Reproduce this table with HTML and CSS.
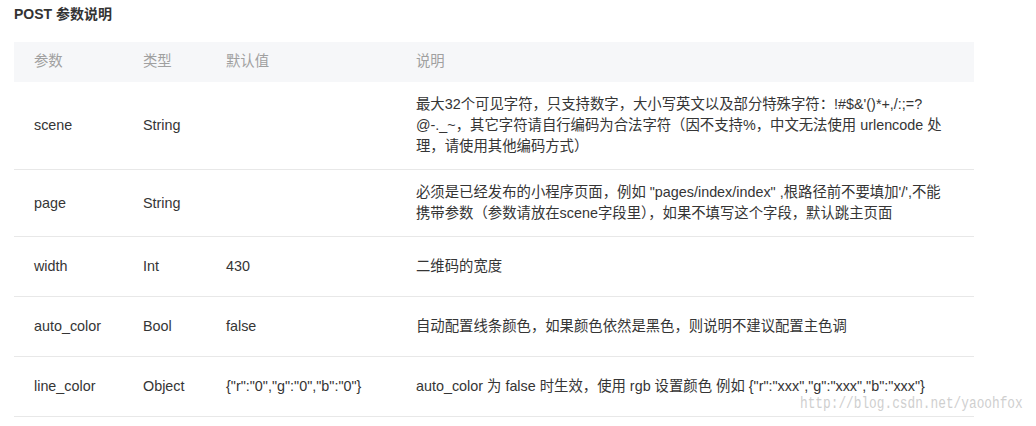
FILE: index.html
```html
<!DOCTYPE html>
<html lang="zh-CN">
<head>
<meta charset="utf-8">
<title>POST 参数说明</title>
<link rel="stylesheet" href="styles.css">
</head>
<body>
<div class="page">
  <h3 class="title">POST 参数说明</h3>
  <div class="table">
    <div class="row head">
      <div class="cell">参数</div>
      <div class="cell">类型</div>
      <div class="cell">默认值</div>
      <div class="cell">说明</div>
    </div>
    <div class="row">
      <div class="cell">scene</div>
      <div class="cell">String</div>
      <div class="cell"></div>
      <div class="cell">最大32个可见字符，只支持数字，大小写英文以及部分特殊字符：!#$&amp;'()*+,/:;=?<br>@-._~，其它字符请自行编码为合法字符（因不支持%，中文无法使用 urlencode 处<br>理，请使用其他编码方式）</div>
    </div>
    <div class="row">
      <div class="cell">page</div>
      <div class="cell">String</div>
      <div class="cell"></div>
      <div class="cell">必须是已经发布的小程序页面，例如 "pages/index/index" ,根路径前不要填加'/',不能<br>携带参数（参数请放在scene字段里），如果不填写这个字段，默认跳主页面</div>
    </div>
    <div class="row">
      <div class="cell">width</div>
      <div class="cell">Int</div>
      <div class="cell">430</div>
      <div class="cell">二维码的宽度</div>
    </div>
    <div class="row">
      <div class="cell">auto_color</div>
      <div class="cell">Bool</div>
      <div class="cell">false</div>
      <div class="cell">自动配置线条颜色，如果颜色依然是黑色，则说明不建议配置主色调</div>
    </div>
    <div class="row">
      <div class="cell">line_color</div>
      <div class="cell">Object</div>
      <div class="cell">{"r":"0","g":"0","b":"0"}</div>
      <div class="cell">auto_color 为 false 时生效，使用 rgb 设置颜色 例如 {"r":"xxx","g":"xxx","b":"xxx"}</div>
    </div>
  </div>
  <div class="watermark">http://blog.csdn.net/yaoohfox</div>
</div>
</body>
</html>
```

FILE: styles.css
```css
html, body {
  margin: 0;
  padding: 0;
  background: #ffffff;
}

body {
  font-family: "Liberation Sans", Arial, "Noto Sans CJK SC", sans-serif;
  color: #353535;
  font-size: 14px;
}

.page {
  position: relative;
  padding: 4px 14px 0 14px;
  height: 422px;
}

.title {
  margin: 0;
  font-size: 14px;
  font-weight: bold;
  line-height: 20px;
  color: #333333;
}

.table {
  margin-top: 18px;
  width: 960px;
}

.row {
  display: grid;
  grid-template-columns: 109px 83px 190px 578px;
  align-items: center;
  min-height: 60px;
  box-sizing: border-box;
  border-bottom: 1px solid #e8e8e8;
  font-size-adjust: 0.542;
}

.row.head {
  min-height: 40px;
  background: #f6f7f9;
  border-bottom: none;
  color: #a0a0a0;
}

.cell {
  padding: 12px 20px;
  line-height: 21px;
  white-space: nowrap;
}

.row.head .cell {
  padding: 9px 20px 10px 20px;
}

.watermark {
  position: absolute;
  left: 800px;
  top: 398px;
  font-family: "Liberation Mono", "Courier New", monospace;
  font-size: 12.8px;
  line-height: 16px;
  color: #cfcfcf;
  transform: scaleY(1.25);
  transform-origin: left bottom;
  white-space: nowrap;
}
```
